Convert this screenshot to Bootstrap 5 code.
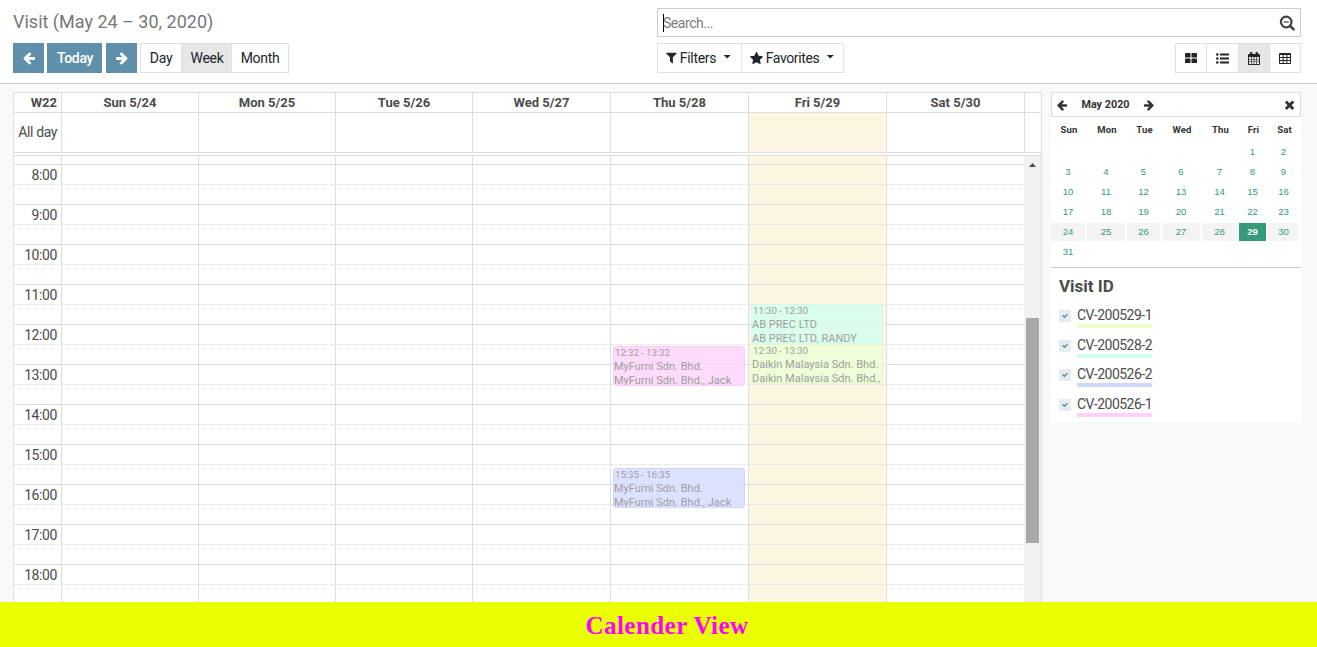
<!DOCTYPE html>
<html lang="en">
<head>
<meta charset="utf-8">
<meta name="viewport" content="width=device-width, initial-scale=1">
<title>Visit</title>
<link href="https://cdn.jsdelivr.net/npm/bootstrap@5.3.0/dist/css/bootstrap.min.css" rel="stylesheet">
<style>
  body { font-family: Roboto, "Open Sans", sans-serif; font-size: 14px; line-height: 20px; color: #4c4c4c; background: #f9f9f9; height: 647px; }
  svg { display: block; fill: currentColor; flex: none; }
  .control-panel { height: 84px; border-bottom: 1px solid #ccc; padding: 8px 16px 0 13px; }
  .cp-side { width: 644px; }
  .page-title { font-size: 18px; line-height: 27px; color: #777; letter-spacing: 0; }
  .search-box { height: 29px; border: 1px solid #ccc; padding: 0 5px; color: #7c7c7c; letter-spacing: -.45px; }
  .caret-bar { width: 1px; height: 18px; background: #000; margin-right: -1px; }
  .btn { --bs-btn-border-radius: 0; --bs-btn-font-size: 14px; --bs-btn-line-height: 20px; --bs-btn-padding-x: 0; --bs-btn-padding-y: 0; height: 30px; display: flex; align-items: center; justify-content: center; letter-spacing: -.3px; }
  .btn-nav { --bs-btn-color: #fff; --bs-btn-bg: #5f8fab; --bs-btn-border-color: #5f8fab; --bs-btn-font-weight: 500; width: 31px; }
  .btn-nav.today { width: 55px; letter-spacing: -.35px; padding-left: 1px; }
  .btn-plain { --bs-btn-color: #212529; --bs-btn-bg: #fff; --bs-btn-border-color: #dee2e6; --bs-btn-active-bg: #e6e6e6; --bs-btn-active-color: #212529; --bs-btn-active-border-color: #dee2e6; }
  .btn-group > .btn { flex: none; }
  .drop { width: 8px; height: 4px; margin: -3px 0 0 7px; background: #212529; clip-path: polygon(0 0, 100% 0, 50% 100%); }
  .cal { width: 1029px; border: 1px solid #ddd; border-bottom: 0; background: #fff; overflow: hidden; }
  .cal-row { display: grid; grid-template-columns: 48px repeat(3, 137px) repeat(4, 138px) 16px; }
  .cal-row > div { border-right: 1px solid #ddd; position: relative; }
  .cal-row > div:last-child { border-right: 0; }
  .axis { text-align: right; padding-right: 4px; letter-spacing: -.4px; }
  .head-row { height: 19px; line-height: 19px; font-weight: 700; text-align: center; font-size: 13px; }
  .head-row .axis { letter-spacing: 0; }
  .allday { height: 41px; line-height: 39px; border-top: 1px solid #ddd; border-bottom: 1px solid #ddd; }
  .today-col { background: #fdf6e3; }
  .slots { border-top: 1px solid #ddd; margin-top: 2px; width: 1010px; }
  .slot { grid-template-columns: 48px repeat(3, 137px) repeat(3, 138px) 137px; height: 20px; }
  .slot > div { border-top: 1px solid #ddd; line-height: 20px; height: 20px; }
  .slot.half > div { border-top-style: dotted; }
  .slot.first { height: 8px; }
  .slot.first > div { border-top: 0; height: 8px; }
  .scroll { width: 17px; margin-top: 2px; border-top: 1px solid #ddd; background: #f1f1f1; }
  .scroll-up { width: 7px; height: 4px; margin: 7px 0 0 5px; background: #505050; clip-path: polygon(50% 0, 100% 100%, 0 100%); }
  .scroll-thumb { width: 13px; height: 225px; margin: 151px 0 0 2px; background: #a8a8a8; }
  .event { position: absolute; left: 2px; width: 132px; height: 40px; z-index: 2; border: 1px solid; border-radius: 3px; overflow: hidden; white-space: nowrap; font-size: 11px; line-height: 14px; color: #9d9d9d; letter-spacing: .02px; }
  .event .when { font-size: 9.8px; line-height: 11px; margin-bottom: 2px; letter-spacing: -.12px; padding-left: 1px; }
  .ev-mint { background: rgba(210,255,236,.8); border-color: #d2fbe9; }
  .ev-lime { background: rgba(235,255,212,.8); border-color: #e8fbcf; }
  .ev-pink { background: rgba(254,210,250,.8); border-color: #fccdf9; }
  .ev-blue { background: rgba(210,218,254,.75); border-color: #cdd6fb; }
  .side { width: 250px; }
  .mini-head { height: 25px; border: 1px solid #ddd; background: #fff; font: 700 10.8px/22px Roboto, sans-serif; color: #333; }
  .mini { font-family: "Liberation Sans", Arial, sans-serif; font-size: 9.6px; line-height: 18px; text-align: center; color: #35997c; background: #fff; height: 151px; border-bottom: 1px solid #ccc; padding-top: 4px; }
  .mini-row { display: grid; grid-template-columns: 34px 38px 33px 38px 35px 27px 31px; gap: 2px; height: 20px; }
  .mini-dow { font: 700 9.5px/18px Roboto, sans-serif; color: #333; height: 22px; letter-spacing: .15px; padding-left: 1px; }
  .mini-week > span { background: #f4f4f4; height: 18px; }
  .mini-week > .mini-today { background: #35997c; color: #fff; font-weight: 700; }
  .filters { background: #fff; height: 154px; padding: 8px 8px 0; }
  .filters h5 { font-size: 17px; line-height: 21px; font-weight: 700; margin: 0 0 8px; }
  .f-item { height: 29.7px; }
  .f-item .box { width: 12px; height: 12px; background: #e7ebef; color: #5f8fab; margin-top: 5px; }
  .f-item .tag { border-bottom: 4px solid; height: 23px; width: 75px; white-space: nowrap; letter-spacing: -.5px; line-height: 21px; }
  .f-item .tag span { color: #4c4c4c; }
  .tag-lime { border-color: #ebffc9 !important; } .tag-mint { border-color: #cffff0 !important; }
  .tag-blue { border-color: #cfd8ff !important; } .tag-pink { border-color: #ffd0fc !important; }
  .banner { height: 45px; line-height: 47px; background: #eaff00; color: #f0f; font-family: "Palatino Linotype", Palatino, "Liberation Serif", serif; font-weight: 700; font-size: 25px; letter-spacing: .45px; padding-left: 17px; }
</style>
</head>
<body class="d-flex flex-column overflow-hidden">
<svg class="d-none">
  <symbol id="left" viewBox="0 0 1792 1792"><path d="M1664 896v128q0 53-32.5 90.5t-84.5 37.5h-704l293 294q38 36 38 90t-38 90l-75 76q-37 37-90 37-52 0-91-37l-651-652q-37-37-37-90 0-52 37-91l651-650q38-38 91-38 52 0 90 38l75 74q38 38 38 91t-38 91l-293 293h704q52 0 84.5 37.5t32.5 90.5z"/></symbol>
  <symbol id="tick" viewBox="0 0 12 12"><path d="M3 6l1.3-1L5.500 6.100 8 3.700l1 1.100-3.500 3.500z"/></symbol>
</svg>

<header class="control-panel bg-white d-flex justify-content-between flex-shrink-0">
  <div class="cp-side">
    <div class="page-title">Visit (May 24 – 30, 2020)</div>
    <div class="d-flex" style="margin-top:8px">
      <button class="btn btn-nav"><svg width="14" height="14"><use href="#left"/></svg></button>
      <button class="btn btn-nav today" style="margin:0 4px 0 3px">Today</button>
      <button class="btn btn-nav"><svg width="14" height="14" style="transform:scaleX(-1)"><use href="#left"/></svg></button>
      <div class="btn-group" style="margin-left:3px">
        <button class="btn btn-plain" style="width:42px">Day</button>
        <button class="btn btn-plain active" style="width:51px;padding-left:1px">Week</button>
        <button class="btn btn-plain" style="width:58px">Month</button>
      </div>
    </div>
  </div>
  <div class="cp-side">
    <div class="search-box d-flex align-items-center">
      <span class="caret-bar"></span><span class="flex-grow-1">Search...</span>
      <svg width="16" height="16" viewBox="0 0 16 16" stroke="#444" style="fill:none"><circle cx="7.200" cy="7" r="5.300" stroke-width="2.200"/><path d="M11.200 11l3.400 3.400" stroke-width="2.600" stroke-linecap="round"/><path d="M4.700 7h5" stroke-width="1.200"/></svg>
    </div>
    <div class="d-flex justify-content-between" style="margin-top:6px">
      <div class="btn-group">
        <button class="btn btn-plain" style="width:85px;padding-right:2px"><svg width="11" height="12" viewBox="180 200 1450 1500"><path d="M1595 295q17 41-14 70l-493 493v742q0 42-39 59-13 5-25 5-27 0-45-19l-256-256q-19-19-19-45v-486l-493-493q-31-29-14-70 17-39 59-39h1280q42 0 59 39z"/></svg><span style="margin-left:3px">Filters</span><i class="drop"></i></button>
        <button class="btn btn-plain" style="width:103px;padding-right:1px"><svg width="13" height="13" viewBox="64 64 1664 1664"><path d="M1728 647q0 22-26 48l-363 354 86 500q1 7 1 20 0 21-10.500 35.500t-30.500 14.500q-19 0-40-12l-449-236-449 236q-22 12-40 12-21 0-31.500-14.500t-10.500-35.500q0-6 2-20l86-500-364-354q-25-27-25-48 0-37 56-46l502-73 225-455q19-41 49-41t49 41l225 455 502 73q56 9 56 46z"/></svg><span style="margin-left:3px;letter-spacing:-.4px">Favorites</span><i class="drop"></i></button>
      </div>
      <div class="btn-group">
        <button class="btn btn-plain" style="width:32px"><svg width="12" height="10"><rect width="5.500" height="4.500" rx=".6"/><rect x="6.500" width="5.500" height="4.500" rx=".6"/><rect y="5.500" width="5.500" height="4.500" rx=".6"/><rect x="6.500" y="5.500" width="5.500" height="4.500" rx=".6"/></svg></button>
        <button class="btn btn-plain" style="width:33px"><svg width="13" height="11"><circle cx="1.300" cy="1.500" r="1.300"/><circle cx="1.300" cy="5.500" r="1.300"/><circle cx="1.300" cy="9.500" r="1.300"/><path d="M4 .5h9v2H4zM4 4.500h9v2H4zM4 8.500h9v2H4z"/></svg></button>
        <button class="btn btn-plain active" style="width:32px"><svg width="12" height="13"><path fill-rule="evenodd" d="M1 2h1V.8Q2 0 3.200 0t1.200.8V2h3.200V.8Q7.600 0 8.800 0T10 .8V2h1q1 0 1 1v9q0 1-1 1H1q-1 0-1-1V3q0-1 1-1zM1 5v1.900h2V5zm2.600 0v1.900h2.100V5zm2.700 0v1.900h2.100V5zM9 5v1.900h2V5zM1 7.500v2h2v-2zm2.600 0v2h2.100v-2zm2.700 0v2h2.100v-2zm2.700 0v2h2v-2zM1 10.100V12h2v-1.900zm2.600 0V12h2.100v-1.900zm2.700 0V12h2.100v-1.900zm2.700 0V12h2v-1.900z"/></svg></button>
        <button class="btn btn-plain" style="width:32px"><svg width="12" height="11"><path fill-rule="evenodd" d="M1 0h10q1 0 1 1v9q0 1-1 1H1q-1 0-1-1V1q0-1 1-1zM1 2v2h2.700V2zm3.700 0v2h2.700V2zm3.700 0v2H11V2zM1 5v2h2.700V5zm3.700 0v2h2.700V5zm3.700 0v2H11V5zM1 8v2h2.700V8zm3.700 0v2h2.700V8zm3.700 0v2H11V8z"/></svg></button>
      </div>
    </div>
  </div>
</header>

<main class="d-flex flex-grow-1 overflow-hidden" style="padding:8px 16px 0 13px;gap:9px">
  <section class="cal flex-shrink-0">
    <div class="cal-row head-row"><div class="axis">W22</div><div>Sun 5/24</div><div>Mon 5/25</div><div>Tue 5/26</div><div>Wed 5/27</div><div>Thu 5/28</div><div>Fri 5/29</div><div>Sat 5/30</div><div></div></div>
    <div class="cal-row allday"><div class="axis">All day</div><div></div><div></div><div></div><div></div><div></div><div class="today-col"></div><div></div><div></div></div>
    <div class="d-flex">
      <div class="slots" id="slots"></div>
      <div class="scroll"><div class="scroll-up"></div><div class="scroll-thumb"></div></div>
    </div>
  </section>

  <aside class="side flex-shrink-0">
    <div class="mini-head d-flex align-items-center">
      <svg width="12" height="12" style="margin:1px 0 0 4px"><use href="#left"/></svg>
      <span class="text-center" style="width:75px">May 2020</span>
      <svg width="12" height="12" style="margin-top:1px;transform:scaleX(-1)"><use href="#left"/></svg>
      <svg class="ms-auto" width="9" height="10" viewBox="290 290 1200 1272" style="margin-right:6px"><path d="M1490 1322q0 40-28 68l-136 136q-28 28-68 28t-68-28l-294-294-294 294q-28 28-68 28t-68-28l-136-136q-28-28-28-68t28-68l294-294-294-294q-28-28-28-68t28-68l136-136q28-28 68-28t68 28l294 294 294-294q28-28 68-28t68 28l136 136q28 28 28 68t-28 68l-294 294 294 294q28 28 28 68z"/></svg>
    </div>
    <div class="mini" id="mini">
      <div class="mini-row mini-dow"><span>Sun</span><span>Mon</span><span>Tue</span><span>Wed</span><span>Thu</span><span>Fri</span><span>Sat</span></div>
    </div>
    <div class="filters">
      <h5>Visit ID</h5>
      <div class="f-item d-flex"><span class="box"><svg width="12" height="12"><use href="#tick"/></svg></span><div class="tag tag-lime" style="margin-left:6px"><span>CV-200529-1</span></div></div>
      <div class="f-item d-flex"><span class="box"><svg width="12" height="12"><use href="#tick"/></svg></span><div class="tag tag-mint" style="margin-left:6px"><span>CV-200528-2</span></div></div>
      <div class="f-item d-flex"><span class="box"><svg width="12" height="12"><use href="#tick"/></svg></span><div class="tag tag-blue" style="margin-left:6px"><span>CV-200526-2</span></div></div>
      <div class="f-item d-flex"><span class="box"><svg width="12" height="12"><use href="#tick"/></svg></span><div class="tag tag-pink" style="margin-left:6px"><span>CV-200526-1</span></div></div>
    </div>
  </aside>
</main>
<footer class="banner text-center flex-shrink-0">Calender View</footer>

<script src="https://cdn.jsdelivr.net/npm/bootstrap@5.3.0/dist/js/bootstrap.bundle.min.js"></script>
<script>
  // day: 0 = Sunday; start: hour of the slot that holds the event; shift: pixels below the slot's line
  const events = [
    { day: 5, start: 11.5, shift: -1, h: 40, cls: 'ev-mint', when: '11:30 - 12:30', lines: ['AB PREC LTD', 'AB PREC LTD, RANDY'] },
    { day: 5, start: 12.5, shift: -1, h: 40, cls: 'ev-lime', when: '12:30 - 13:30', lines: ['Daikin Malaysia Sdn. Bhd.', 'Daikin Malaysia Sdn. Bhd.,'] },
    { day: 4, start: 12.5, shift: 1, h: 40, cls: 'ev-pink', when: '12:32 - 13:32', lines: ['MyFurni Sdn. Bhd.', 'MyFurni Sdn. Bhd., Jack'] },
    { day: 4, start: 15.5, shift: 3, h: 40, cls: 'ev-blue', when: '15:35 - 16:35', lines: ['MyFurni Sdn. Bhd.', 'MyFurni Sdn. Bhd., Jack'] }
  ];
  let html = '';
  for (let t = 7.5; t < 19; t += 0.5) {
    const half = t % 1 !== 0;
    html += `<div class="cal-row slot ${half ? 'half' : ''} ${t === 7.5 ? 'first' : ''}"><div class="axis">${half ? '' : t + ':00'}</div>`;
    for (let d = 0; d < 7; d++) {
      const ev = events.filter(e => e.day === d && e.start === t).map(e =>
        `<div class="event ${e.cls}" style="top:${e.shift}px;height:${e.h}px"><div class="when">${e.when}</div>${e.lines.map(l => `<div>${l}</div>`).join('')}</div>`).join('');
      html += `<div class="${d === 5 ? 'today-col' : ''}">${ev}</div>`;
    }
    html += '</div>';
  }
  document.getElementById('slots').innerHTML = html;

  let mini = '';
  for (let w = 0; w < 6; w++) {
    mini += `<div class="mini-row ${w === 4 ? 'mini-week' : ''}">`;
    for (let d = 0; d < 7; d++) {
      const n = w * 7 + d - 4;
      mini += `<span class="${n === 29 ? 'mini-today' : ''}">${n > 0 && n < 32 ? n : ''}</span>`;
    }
    mini += '</div>';
  }
  document.getElementById('mini').insertAdjacentHTML('beforeend', mini);
</script>
</body>
</html>
